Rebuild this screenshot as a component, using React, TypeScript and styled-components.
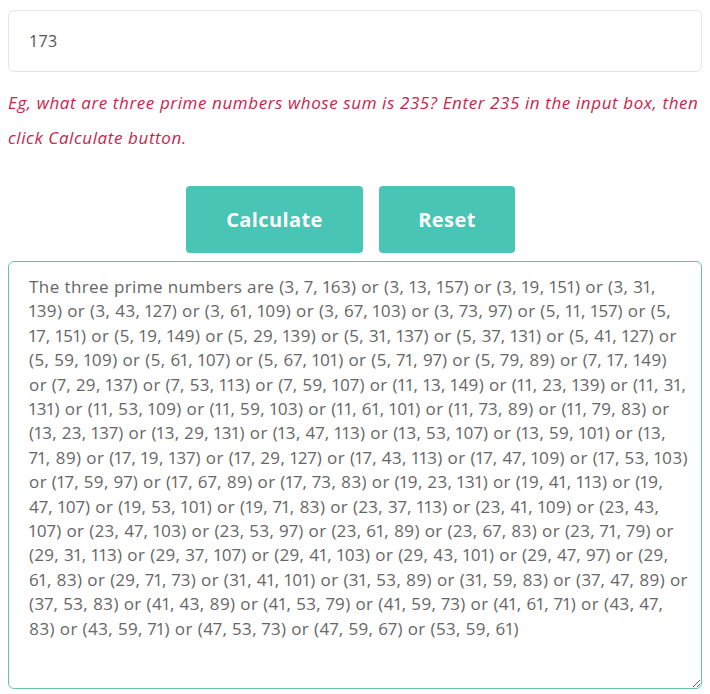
import React from "react";
import styled, { createGlobalStyle } from "styled-components";

const GlobalStyle = createGlobalStyle`
  html, body { margin: 0; padding: 0; background: #ffffff; }
  * { box-sizing: border-box; }
`;

const Page = styled.div`
  padding: 10px 8px 0 8px;
  font-family: "Open Sans", "Liberation Sans", sans-serif;
`;

const NumberInput = styled.input`
  display: block;
  width: 100%;
  height: 62px;
  border: 1px solid #e6e6e6;
  border-radius: 6px;
  padding: 0 20px;
  font-family: inherit;
  font-size: 16px;
  letter-spacing: 0.3px;
  color: #555555;
  outline: none;
  background: #fff;
`;

const Hint = styled.p`
  margin: 13px 0 0 0;
  font-style: italic;
  font-size: 17px;
  line-height: 35px;
  color: #c7254e;
  letter-spacing: 0.6px;
`;

const ButtonRow = styled.div`
  display: flex;
  justify-content: center;
  gap: 16px;
  margin: 31px 0 0 0;
  padding-right: 9px;
`;

const Button = styled.button<{ $w: number }>`
  width: ${(p) => p.$w}px;
  height: 67px;
  border: none;
  border-radius: 4px;
  background: #48c5b4;
  color: #ffffff;
  font-family: inherit;
  font-weight: 700;
  font-size: 20px;
  letter-spacing: 0.4px;
  cursor: pointer;
`;

const Result = styled.textarea`
  display: block;
  width: 100%;
  height: 428px;
  margin-top: 8px;
  border: 1px solid #6cc0b0;
  border-radius: 6px;
  padding: 13px 13px 13px 20px;
  font-family: inherit;
  font-size: 17px;
  font-variant-numeric: proportional-nums;
  letter-spacing: 0.42px;
  line-height: 24.4px;
  color: #666666;
  outline: none;
  resize: vertical;
  background: #fff;
`;

const resultText =
  "The three prime numbers are (3, 7, 163) or (3, 13, 157) or (3, 19, 151) or (3, 31, 139) or (3, 43, 127) or (3, 61, 109) or (3, 67, 103) or (3, 73, 97) or (5, 11, 157) or (5, 17, 151) or (5, 19, 149) or (5, 29, 139) or (5, 31, 137) or (5, 37, 131) or (5, 41, 127) or (5, 59, 109) or (5, 61, 107) or (5, 67, 101) or (5, 71, 97) or (5, 79, 89) or (7, 17, 149) or (7, 29, 137) or (7, 53, 113) or (7, 59, 107) or (11, 13, 149) or (11, 23, 139) or (11, 31, 131) or (11, 53, 109) or (11, 59, 103) or (11, 61, 101) or (11, 73, 89) or (11, 79, 83) or (13, 23, 137) or (13, 29, 131) or (13, 47, 113) or (13, 53, 107) or (13, 59, 101) or (13, 71, 89) or (17, 19, 137) or (17, 29, 127) or (17, 43, 113) or (17, 47, 109) or (17, 53, 103) or (17, 59, 97) or (17, 67, 89) or (17, 73, 83) or (19, 23, 131) or (19, 41, 113) or (19, 47, 107) or (19, 53, 101) or (19, 71, 83) or (23, 37, 113) or (23, 41, 109) or (23, 43, 107) or (23, 47, 103) or (23, 53, 97) or (23, 61, 89) or (23, 67, 83) or (23, 71, 79) or (29, 31, 113) or (29, 37, 107) or (29, 41, 103) or (29, 43, 101) or (29, 47, 97) or (29, 61, 83) or (29, 71, 73) or (31, 41, 101) or (31, 53, 89) or (31, 59, 83) or (37, 47, 89) or (37, 53, 83) or (41, 43, 89) or (41, 53, 79) or (41, 59, 73) or (41, 61, 71) or (43, 47, 83) or (43, 59, 71) or (47, 53, 73) or (47, 59, 67) or (53, 59, 61)";

export default function App() {
  return (
    <>
      <GlobalStyle />
      <Page>
        <NumberInput type="text" defaultValue="173" />
        <Hint>
          Eg, what are three prime numbers whose sum is 235? Enter 235 in the input box, then click
          Calculate button.
        </Hint>
        <ButtonRow>
          <Button $w={177}>Calculate</Button>
          <Button $w={136}>Reset</Button>
        </ButtonRow>
        <Result readOnly value={resultText} />
      </Page>
    </>
  );
}
